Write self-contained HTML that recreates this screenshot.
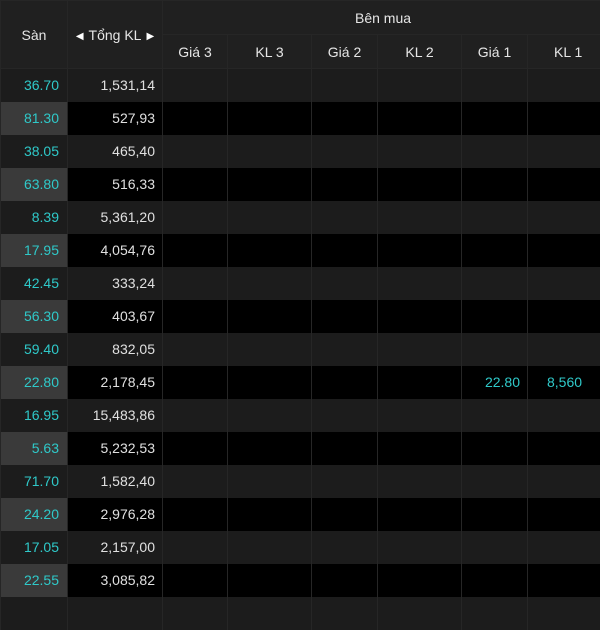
<!DOCTYPE html>
<html><head><meta charset="utf-8"><style>
*{margin:0;padding:0;box-sizing:border-box}
body{width:600px;height:600px;overflow:hidden;background:#000;font-family:"Liberation Sans",Arial,sans-serif;font-size:14px;color:#e0e0e0}
table{border-collapse:collapse;table-layout:fixed;width:640px}
td,th{border:1px solid #262626;white-space:nowrap;overflow:hidden}
td{border-top:none;border-bottom:none}
th{background:#202020;font-weight:normal;color:#e6e6e6;height:34px}
td{height:33px;text-align:right;padding-right:7px}
tr.a td{background:#1c1c1c}
tr.b td{background:#000}
tr.b td.s{background:#3a3a3a}
td.s{color:#2fc9c9;padding-right:8px}
.c{color:#2fc9c9}
.tri{font-size:10px;color:#fff;margin:0 5px;vertical-align:1px}
</style></head><body>
<table>
<colgroup><col style="width:67px"><col style="width:95px"><col style="width:65px"><col style="width:84px"><col style="width:66px"><col style="width:84px"><col style="width:66px"><col style="width:113px"></colgroup>
<tr><th rowspan="2" style="height:68px">Sàn</th><th rowspan="2"><span class="tri">◀</span>Tổng KL<span class="tri">▶</span></th><th colspan="6" style="text-align:left;padding-left:192px">Bên mua</th></tr>
<tr><th>Giá 3</th><th>KL 3</th><th>Giá 2</th><th>KL 2</th><th>Giá 1</th><th style="text-align:left;padding-left:26px">KL 1</th></tr>
<tr class="a"><td class="s">36.70</td><td>1,531,14</td><td></td><td></td><td></td><td></td><td></td><td></td></tr>
<tr class="b"><td class="s">81.30</td><td>527,93</td><td></td><td></td><td></td><td></td><td></td><td></td></tr>
<tr class="a"><td class="s">38.05</td><td>465,40</td><td></td><td></td><td></td><td></td><td></td><td></td></tr>
<tr class="b"><td class="s">63.80</td><td>516,33</td><td></td><td></td><td></td><td></td><td></td><td></td></tr>
<tr class="a"><td class="s">8.39</td><td>5,361,20</td><td></td><td></td><td></td><td></td><td></td><td></td></tr>
<tr class="b"><td class="s">17.95</td><td>4,054,76</td><td></td><td></td><td></td><td></td><td></td><td></td></tr>
<tr class="a"><td class="s">42.45</td><td>333,24</td><td></td><td></td><td></td><td></td><td></td><td></td></tr>
<tr class="b"><td class="s">56.30</td><td>403,67</td><td></td><td></td><td></td><td></td><td></td><td></td></tr>
<tr class="a"><td class="s">59.40</td><td>832,05</td><td></td><td></td><td></td><td></td><td></td><td></td></tr>
<tr class="b"><td class="s">22.80</td><td>2,178,45</td><td></td><td></td><td></td><td></td><td class="c">22.80</td><td class="c" style="text-align:left;padding-left:19px">8,560</td></tr>
<tr class="a"><td class="s">16.95</td><td>15,483,86</td><td></td><td></td><td></td><td></td><td></td><td></td></tr>
<tr class="b"><td class="s">5.63</td><td>5,232,53</td><td></td><td></td><td></td><td></td><td></td><td></td></tr>
<tr class="a"><td class="s">71.70</td><td>1,582,40</td><td></td><td></td><td></td><td></td><td></td><td></td></tr>
<tr class="b"><td class="s">24.20</td><td>2,976,28</td><td></td><td></td><td></td><td></td><td></td><td></td></tr>
<tr class="a"><td class="s">17.05</td><td>2,157,00</td><td></td><td></td><td></td><td></td><td></td><td></td></tr>
<tr class="b"><td class="s">22.55</td><td>3,085,82</td><td></td><td></td><td></td><td></td><td></td><td></td></tr>
<tr class="a"><td class="s"></td><td></td><td></td><td></td><td></td><td></td><td></td><td></td></tr>
</table>
</body></html>
